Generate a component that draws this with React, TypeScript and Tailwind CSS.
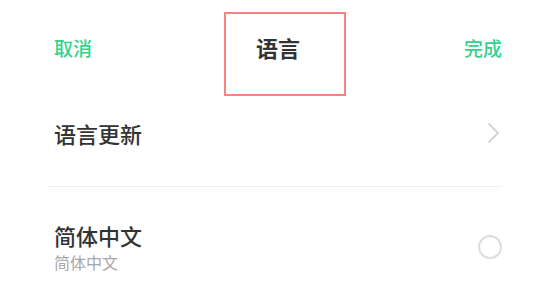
const font = { fontFamily: '"Noto Sans CJK SC", "Noto Sans", sans-serif' };

export default function App() {
  return (
    <div className="relative w-[550px] h-[290px] bg-white overflow-hidden" style={font}>
      {/* header */}
      <div className="flex h-[94px] items-center justify-between pl-[54px] pr-[48px]">
        <button className="text-[19px] font-medium leading-none text-[#33d38c]">取消</button>
        <h1 className="text-[22px] font-bold leading-none text-[#333333]">语言</h1>
        <button className="text-[19px] font-medium leading-none text-[#33d38c]">完成</button>
      </div>

      {/* highlight box over the title */}
      <div className="absolute left-[224px] top-[12px] h-[84px] w-[122px] border-2 border-[#ff8080]" />

      <div className="px-[48px]">
        <div className="flex h-[78px] items-center justify-between mb-[14px]">
          <span className="pl-[6px] text-[22px] font-medium leading-none text-[#333333]">语言更新</span>
          <svg width="14" height="22" viewBox="0 0 14 22" fill="none" className="mr-[1px]">
            <path d="M2 2 L11 11 L2 20" stroke="#d4d4d4" strokeWidth="1.8" strokeLinecap="round" strokeLinejoin="round" />
          </svg>
        </div>
        <div className="h-px bg-[#f0f0f0]" />
        <div className="flex items-center justify-between pt-[35px]">
          <div className="flex flex-col pl-[6px]">
            <span className="text-[22px] font-medium leading-[26px] text-[#333333]">简体中文</span>
            <span className="text-[16px] leading-[18px] text-[#a8a8a8] mt-[5px]">简体中文</span>
          </div>
          <div className="h-[24px] w-[24px] rounded-full border-2 border-[#dddddd]" />
        </div>
      </div>
    </div>
  );
}
